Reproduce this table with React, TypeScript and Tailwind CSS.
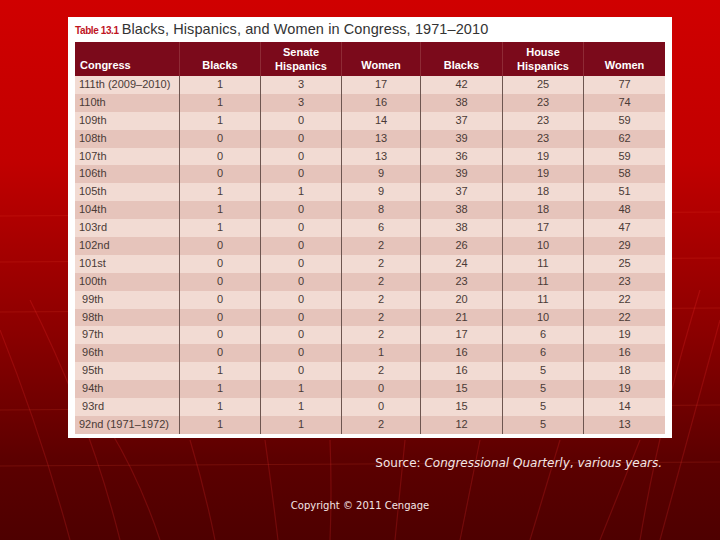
const rows: [string, number, number, number, number, number, number][] = [
  ["111th (2009–2010)", 1, 3, 17, 42, 25, 77],
  ["110th", 1, 3, 16, 38, 23, 74],
  ["109th", 1, 0, 14, 37, 23, 59],
  ["108th", 0, 0, 13, 39, 23, 62],
  ["107th", 0, 0, 13, 36, 19, 59],
  ["106th", 0, 0, 9, 39, 19, 58],
  ["105th", 1, 1, 9, 37, 18, 51],
  ["104th", 1, 0, 8, 38, 18, 48],
  ["103rd", 1, 0, 6, 38, 17, 47],
  ["102nd", 0, 0, 2, 26, 10, 29],
  ["101st", 0, 0, 2, 24, 11, 25],
  ["100th", 0, 0, 2, 23, 11, 23],
  [" 99th", 0, 0, 2, 20, 11, 22],
  [" 98th", 0, 0, 2, 21, 10, 22],
  [" 97th", 0, 0, 2, 17, 6, 19],
  [" 96th", 0, 0, 1, 16, 6, 16],
  [" 95th", 1, 0, 2, 16, 5, 18],
  [" 94th", 1, 1, 0, 15, 5, 19],
  [" 93rd", 1, 1, 0, 15, 5, 14],
  ["92nd (1971–1972)", 1, 1, 2, 12, 5, 13],
];

const cols = "grid grid-cols-[105px_81px_81px_79px_82px_81px_81px]";

const Backdrop = () => (
  <svg className="absolute inset-0 w-full h-full" viewBox="0 0 720 540" preserveAspectRatio="none">
    <g stroke="#ff5a3a" strokeOpacity="0.16" strokeWidth="1" fill="none">
      <path d="M0 216 L720 212" />
      <path d="M0 262 L720 258" />
      <path d="M0 312 L720 308" />
      <path d="M0 410 L720 405" />
      <path d="M0 466 L720 462" />
    </g>
    <g stroke="#ff3030" strokeOpacity="0.2" strokeWidth="1.2" fill="none">
      <path d="M0 330 Q40 430 70 540" />
      <path d="M30 300 Q90 420 120 540" />
      <path d="M110 430 Q140 480 160 540" />
      <path d="M190 440 Q205 490 215 540" />
      <path d="M265 440 Q272 490 278 540" />
      <path d="M330 440 Q332 490 330 540" />
      <path d="M405 440 Q400 490 395 540" />
      <path d="M480 440 Q470 490 460 540" />
      <path d="M560 440 Q545 490 530 540" />
      <path d="M640 440 Q620 490 600 540" />
      <path d="M720 320 Q690 430 660 540" />
      <path d="M700 290 Q660 420 640 540" />
    </g>
  </svg>
);

export default function App() {
  return (
    <div className="relative w-[720px] h-[540px] overflow-hidden bg-[linear-gradient(180deg,#d00000_0%,#c10000_30%,#8a0000_62%,#5c0000_85%,#4e0000_100%)]">
      <Backdrop />
      <div className="relative flex flex-col items-start pl-[68px] pt-[17px]">
        <div className="w-[604px] h-[421px] bg-white px-[7px] pt-[2px] font-['Liberation_Sans',sans-serif]">
          <div className="flex items-baseline h-[23px] gap-[3px]">
            <span className="text-[10px] font-bold text-[#c0141f] tracking-[-0.4px]">Table 13.1</span>
            <span className="text-[14.5px] text-[#333] tracking-[0.1px]">Blacks, Hispanics, and Women in Congress, 1971–2010</span>
          </div>
          <div className={`${cols} h-[34px] bg-[#7b0a1b] text-white text-[11px] font-bold`}>
            <div className="flex items-end pl-[5px] pb-[3px] border-r border-[#8f2a35]">Congress</div>
            <div className="flex items-end justify-center pb-[3px] border-r border-[#8f2a35]">Blacks</div>
            <div className="flex flex-col items-center justify-end pb-[3px] leading-[14px] border-r border-[#8f2a35]">
              <span>Senate</span>
              <span>Hispanics</span>
            </div>
            <div className="flex items-end justify-center pb-[3px] border-r border-[#8f2a35]">Women</div>
            <div className="flex items-end justify-center pb-[3px] border-r border-[#8f2a35]">Blacks</div>
            <div className="flex flex-col items-center justify-end pb-[3px] leading-[14px] border-r border-[#8f2a35]">
              <span>House</span>
              <span>Hispanics</span>
            </div>
            <div className="flex items-end justify-center pb-[3px]">Women</div>
          </div>
          {rows.map((r, i) => (
            <div
              key={r[0]}
              className={`${cols} h-[17.9px] text-[11px] leading-[17.9px] text-[#4a3a36] ${i % 2 === 0 ? "bg-[#f2dbd3]" : "bg-[#e6c4bb]"}`}
            >
              <div className="pl-[4px] whitespace-pre border-r border-[#6e5650]">{r[0]}</div>
              {r.slice(1).map((v, j) => (
                <div key={j} className={`text-center ${j < 5 ? "border-r border-[#6e5650]" : ""}`}>
                  {v}
                </div>
              ))}
            </div>
          ))}
        </div>
        <div className="w-[604px] flex justify-end pr-[10px] mt-[16px] text-[12px] text-[#f4e6e6] font-['DejaVu_Sans',sans-serif]">
          <span>
            Source: <i>Congressional Quarterly</i>, <i>various years.</i>
          </span>
        </div>
        <div className="w-[584px] flex justify-center mt-[26px] text-[10px] text-[#f4e6e6] font-['DejaVu_Sans',sans-serif]">
          Copyright © 2011 Cengage
        </div>
      </div>
    </div>
  );
}
